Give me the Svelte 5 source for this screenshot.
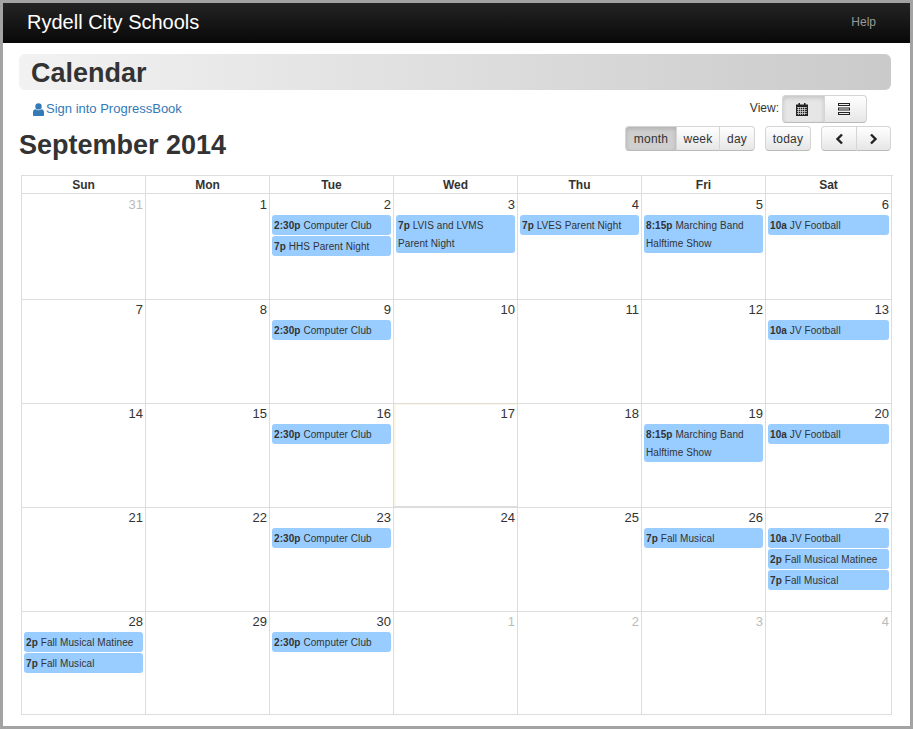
<script>
  const heads = ["Sun", "Mon", "Tue", "Wed", "Thu", "Fri", "Sat"];

  const cc = { time: "2:30p", title: "Computer Club" };
  const jv = { time: "10a", title: "JV Football" };
  const band = { time: "8:15p", title: "Marching Band Halftime Show" };
  const matinee = { time: "2p", title: "Fall Musical Matinee" };
  const musical = { time: "7p", title: "Fall Musical" };

  const weeks = [
    [
      { n: 31, other: true },
      { n: 1 },
      { n: 2, events: [cc, { time: "7p", title: "HHS Parent Night" }] },
      { n: 3, events: [{ time: "7p", title: "LVIS and LVMS Parent Night" }] },
      { n: 4, events: [{ time: "7p", title: "LVES Parent Night" }] },
      { n: 5, events: [band] },
      { n: 6, events: [jv] },
    ],
    [
      { n: 7 },
      { n: 8 },
      { n: 9, events: [cc] },
      { n: 10 },
      { n: 11 },
      { n: 12 },
      { n: 13, events: [jv] },
    ],
    [
      { n: 14 },
      { n: 15 },
      { n: 16, events: [cc] },
      { n: 17, today: true },
      { n: 18 },
      { n: 19, events: [band] },
      { n: 20, events: [jv] },
    ],
    [
      { n: 21 },
      { n: 22 },
      { n: 23, events: [cc] },
      { n: 24 },
      { n: 25 },
      { n: 26, events: [musical] },
      { n: 27, events: [jv, matinee, musical] },
    ],
    [
      { n: 28, events: [matinee, musical] },
      { n: 29 },
      { n: 30, events: [cc] },
      { n: 1, other: true },
      { n: 2, other: true },
      { n: 3, other: true },
      { n: 4, other: true },
    ],
  ];
</script>

<div class="window">
  <header class="navbar">
    <span class="brand">Rydell City Schools</span>
    <span class="help">Help</span>
  </header>

  <main class="content">
    <div class="banner"><h1>Calendar</h1></div>

    <div class="sub-row">
      <a class="sign-in" href="#top">
        <svg width="11" height="13" viewBox="0 0 11 13" aria-hidden="true">
          <circle cx="5.5" cy="3.4" r="3.2" fill="#337ab7" />
          <path d="M0 12V9.2C0 7.4 1.2 6.2 2.6 6.2 3.4 6.9 4.4 7.3 5.5 7.3S7.6 6.9 8.4 6.2C9.8 6.2 11 7.4 11 9.2V12C11 12.6 10.6 13 10 13H1C.4 13 0 12.6 0 12Z" fill="#337ab7" />
        </svg>
        Sign into ProgressBook
      </a>
      <div class="view">
        <span>View:</span>
        <div class="group">
          <button class="btn view-btn active" aria-label="Calendar view">
            <svg width="12" height="13" viewBox="0 0 12 13" aria-hidden="true">
              <path d="M0 1.5H12V13H0Z" fill="#222" />
              <path d="M2.5 0H4V2.5H2.5ZM8 0H9.500V2.500H8Z" fill="#222" />
              <path d="M1 4.500H11M1 6.500H11M1 8.500H11M1 10.500H11M2.500 4V12M4.500 4V12M6.500 4V12M8.500 4V12" stroke="#ddd" stroke-width="0.7" fill="none" />
            </svg>
          </button>
          <button class="btn view-btn" aria-label="List view">
            <svg width="12" height="12" viewBox="0 0 12 12" aria-hidden="true">
              <path d="M0 0H12V3H0ZM0 4.500H12V7.500H0ZM0 9H12V12H0Z" fill="#222" />
              <path d="M1 1.500H11M1 6H11M1 10.500H11" stroke="#eee" stroke-width="1" />
            </svg>
          </button>
        </div>
      </div>
    </div>

    <div class="toolbar">
      <h2>September 2014</h2>
      <div class="tools">
        <div class="group">
          <button class="btn active month">month</button>
          <button class="btn week">week</button>
          <button class="btn day">day</button>
        </div>
        <button class="btn solo">today</button>
        <div class="group">
          <button class="btn arrow" aria-label="Previous">
            <svg width="9" height="12" viewBox="0 0 9 12" aria-hidden="true"><path d="M7 1.500 2.500 6 7 10.500" fill="none" stroke="#222" stroke-width="2.400" /></svg>
          </button>
          <button class="btn arrow next" aria-label="Next">
            <svg width="9" height="12" viewBox="0 0 9 12" aria-hidden="true"><path d="M2 1.500 6.500 6 2 10.500" fill="none" stroke="#222" stroke-width="2.400" /></svg>
          </button>
        </div>
      </div>
    </div>

    <div class="calendar">
      <div class="week-row head">
        {#each heads as h}
          <div class="head-cell">{h}</div>
        {/each}
      </div>
      {#each weeks as week, w}
        <div class="week-row days w{w}">
          {#each week as day}
            <div class="day-cell" class:today={day.today}>
              <div class="num" class:other={day.other}>{day.n}</div>
              {#each day.events ?? [] as ev}
                <div class="event"><b>{ev.time}</b> {ev.title}</div>
              {/each}
            </div>
          {/each}
        </div>
      {/each}
    </div>
  </main>
</div>

<style>
  :global(body) {
    margin: 0;
    background: #a3a3a3;
  }

  .window {
    width: 907px;
    height: 723px;
    margin: 3px;
    background: #fff;
    font-family: "Liberation Sans", Arial, sans-serif;
    color: #333;
    overflow: hidden;
  }

  .navbar {
    height: 40px;
    background: linear-gradient(to bottom, #242424, #080808);
    display: flex;
    align-items: center;
    justify-content: space-between;
    padding: 0 34px 2px 24px;
    box-sizing: border-box;
  }

  .brand {
    font-size: 20px;
    color: #fff;
  }

  .help {
    font-size: 12px;
    color: #999;
  }

  .content {
    padding: 11px 19px 0 16px;
  }

  .banner {
    height: 36px;
    border-radius: 6px;
    background: linear-gradient(to right, #f2f2f2, #cacaca);
    padding-left: 12px;
  }

  h1 {
    margin: 0;
    font-size: 27px;
    line-height: 38px;
    font-weight: bold;
    color: #333;
  }

  .sub-row {
    height: 36px;
    display: flex;
    justify-content: space-between;
    padding: 5px 24px 0 14px;
    box-sizing: border-box;
  }

  .sign-in {
    font-size: 13px;
    line-height: 28px;
    height: 28px;
    color: #337ab7;
    text-decoration: none;
    display: flex;
    align-items: center;
    gap: 2px;
  }

  .view {
    display: flex;
    align-items: flex-start;
    gap: 3px;
    font-size: 12px;
    line-height: 26px;
  }

  .group {
    display: flex;
  }

  .btn {
    display: flex;
    align-items: center;
    justify-content: center;
    padding: 0;
    height: 25px;
    font-family: inherit;
    font-size: 12px;
    letter-spacing: 0.2px;
    color: #333;
    background: linear-gradient(to bottom, #fff, #e6e6e6);
    border: 1px solid #d5d5d5;
    border-bottom-color: #bbb;
    box-sizing: border-box;
    margin-left: -1px;
  }

  .group .btn:first-child {
    margin-left: 0;
    border-radius: 4px 0 0 4px;
  }

  .group .btn:last-child {
    border-radius: 0 4px 4px 0;
  }

  .btn.active {
    background: #cfcfcf;
    box-shadow: inset 0 2px 4px rgba(0, 0, 0, 0.15);
  }

  .view-btn {
    width: 43px;
    height: 28px;
    padding-right: 3px;
  }

  .view-btn.active {
    background: #e6e6e6;
  }

  .toolbar {
    height: 49px;
    display: flex;
    justify-content: space-between;
    align-items: flex-start;
  }

  h2 {
    margin: 3px 0 0;
    font-size: 27px;
    line-height: 32px;
    font-weight: bold;
    color: #333;
  }

  .tools {
    display: flex;
    gap: 10px;
  }

  .month {
    width: 52px;
  }

  .week {
    width: 44px;
  }

  .day {
    width: 36px;
  }

  .solo {
    width: 46px;
    margin-left: 0;
    border-radius: 4px;
  }

  .arrow {
    width: 36px;
  }

  .arrow.next {
    width: 35px;
  }

  .calendar {
    margin-left: 2px;
    width: 871px;
    border-top: 1px solid #ddd;
    border-left: 1px solid #ddd;
  }

  .week-row {
    display: grid;
    grid-template-columns: repeat(6, 124px) 126px;
    margin-left: -1px;
    padding-left: 1px;
  }

  .head-cell {
    height: 17px;
    line-height: 19px;
    text-align: center;
    font-size: 12px;
    font-weight: bold;
    border-right: 1px solid #ddd;
    border-bottom: 1px solid #ddd;
    box-sizing: content-box;
  }

  .week-row > div {
    min-width: 0;
  }

  .day-cell {
    border-right: 1px solid #ddd;
    border-bottom: 1px solid #ddd;
    padding: 0 2px;
    box-sizing: border-box;
    height: 104px;
  }

  .w0 .day-cell {
    height: 106px;
  }

  .w4 .day-cell {
    height: 103px;
  }

  .day-cell.today {
    background: #fff;
    box-shadow: inset 2px 1px 0 #fcf8e3;
    border-bottom: 2px solid #ddd;
  }

  .num {
    height: 20px;
    line-height: 19px;
    text-align: right;
    font-size: 13px;
    color: #333;
  }

  .w0 .num {
    height: 21px;
    line-height: 21px;
  }

  .num.other {
    color: #bbb;
  }

  .event {
    background: #99ccff;
    border-radius: 3px;
    padding: 2px 2px 0;
    margin-bottom: 1px;
    font-size: 10px;
    letter-spacing: 0.08px;
    line-height: 18px;
    color: #333;
  }

  .event b {
    font-weight: bold;
  }
</style>
